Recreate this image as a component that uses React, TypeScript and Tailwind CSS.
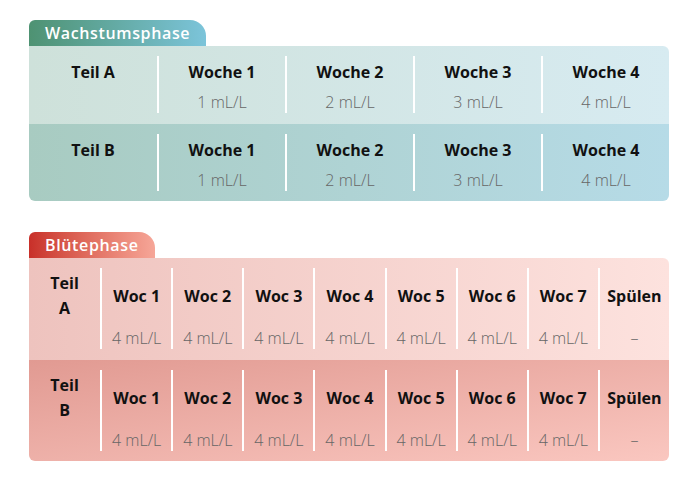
const growWeeks = [
  { label: "Woche 1", a: "1 mL/L", b: "1 mL/L" },
  { label: "Woche 2", a: "2 mL/L", b: "2 mL/L" },
  { label: "Woche 3", a: "3 mL/L", b: "3 mL/L" },
  { label: "Woche 4", a: "4 mL/L", b: "4 mL/L" },
];

const bloomWeeks = [
  "Woc 1",
  "Woc 2",
  "Woc 3",
  "Woc 4",
  "Woc 5",
  "Woc 6",
  "Woc 7",
];

const font = { fontFamily: '"Open Sans", "Liberation Sans", sans-serif' };

const Tab = ({ label, className }: { label: string; className: string }) => (
  <div
    className={`inline-flex h-[26px] items-center rounded-tl-md rounded-tr-2xl px-4 text-[16px] font-semibold tracking-[0.04em] text-white ${className}`}
  >
    {label}
  </div>
);

const Cell = ({
  title,
  value,
  divider,
  tall,
  narrow,
}: {
  title: string;
  value?: string;
  divider: boolean;
  tall?: boolean;
  narrow?: boolean;
}) => (
  <div
    className={`flex flex-col items-center ${tall ? "pt-[3px]" : "pt-1"} ${
      divider ? "border-l-2 border-white" : ""
    }`}
  >
    <div
      className={`flex items-center justify-center text-center text-[16px] font-bold leading-[25px] text-[#111] ${
        tall ? "h-[50px]" : "h-[25px]"
      }`}
    >
      <span className={narrow ? "w-min" : ""}>{title}</span>
    </div>
    <div className="mt-1.5 whitespace-nowrap text-[16px] font-light leading-[22px] text-[#666]">
      {value ?? ""}
    </div>
  </div>
);

const GrowRow = ({ part, bg }: { part: "a" | "b"; bg: string }) => (
  <div
    className={`grid grid-cols-5 pt-[10px] ${
      part === "a" ? "pb-[11px]" : "pb-[10px]"
    } ${bg}`}
  >
    <Cell title={part === "a" ? "Teil A" : "Teil B"} divider={false} />
    {growWeeks.map((w) => (
      <Cell key={w.label} title={w.label} value={w[part]} divider />
    ))}
  </div>
);

const BloomRow = ({ part, bg }: { part: "A" | "B"; bg: string }) => (
  <div
    className={`grid grid-cols-9 pt-[10px] ${
      part === "A" ? "pb-[11px]" : "pb-[10px]"
    } ${bg}`}
  >
    <Cell title={`Teil ${part}`} divider={false} tall narrow />
    {bloomWeeks.map((w) => (
      <Cell key={w} title={w} value="4 mL/L" divider tall />
    ))}
    <Cell title="Spülen" value="–" divider tall />
  </div>
);

export default function App() {
  return (
    <div className="min-h-screen bg-white pl-[29px] pt-5" style={font}>
      <div className="w-[640px]">
        <Tab
          label="Wachstumsphase"
          className="bg-linear-to-r from-[#4e9272] to-[#7cc4da]"
        />
        <div className="overflow-hidden rounded-tr-md rounded-b-md">
          <GrowRow
            part="a"
            bg="bg-linear-to-r from-[#cee1da] to-[#d7ebf1]"
          />
          <GrowRow
            part="b"
            bg="bg-linear-to-r from-[#a8cbc1] to-[#b6dbe7]"
          />
        </div>

        <div className="mt-[31px]">
          <Tab
            label="Blütephase"
            className="bg-linear-to-r from-[#c82f29] to-[#f6a698]"
          />
          <div className="overflow-hidden rounded-tr-md rounded-b-md">
            <BloomRow
              part="A"
              bg="bg-linear-to-r from-[#eec3be] to-[#fde2de]"
            />
            <BloomRow
              part="B"
              bg="bg-linear-to-br from-[#e19a92] to-[#fac7c0]"
            />
          </div>
        </div>
      </div>
    </div>
  );
}
